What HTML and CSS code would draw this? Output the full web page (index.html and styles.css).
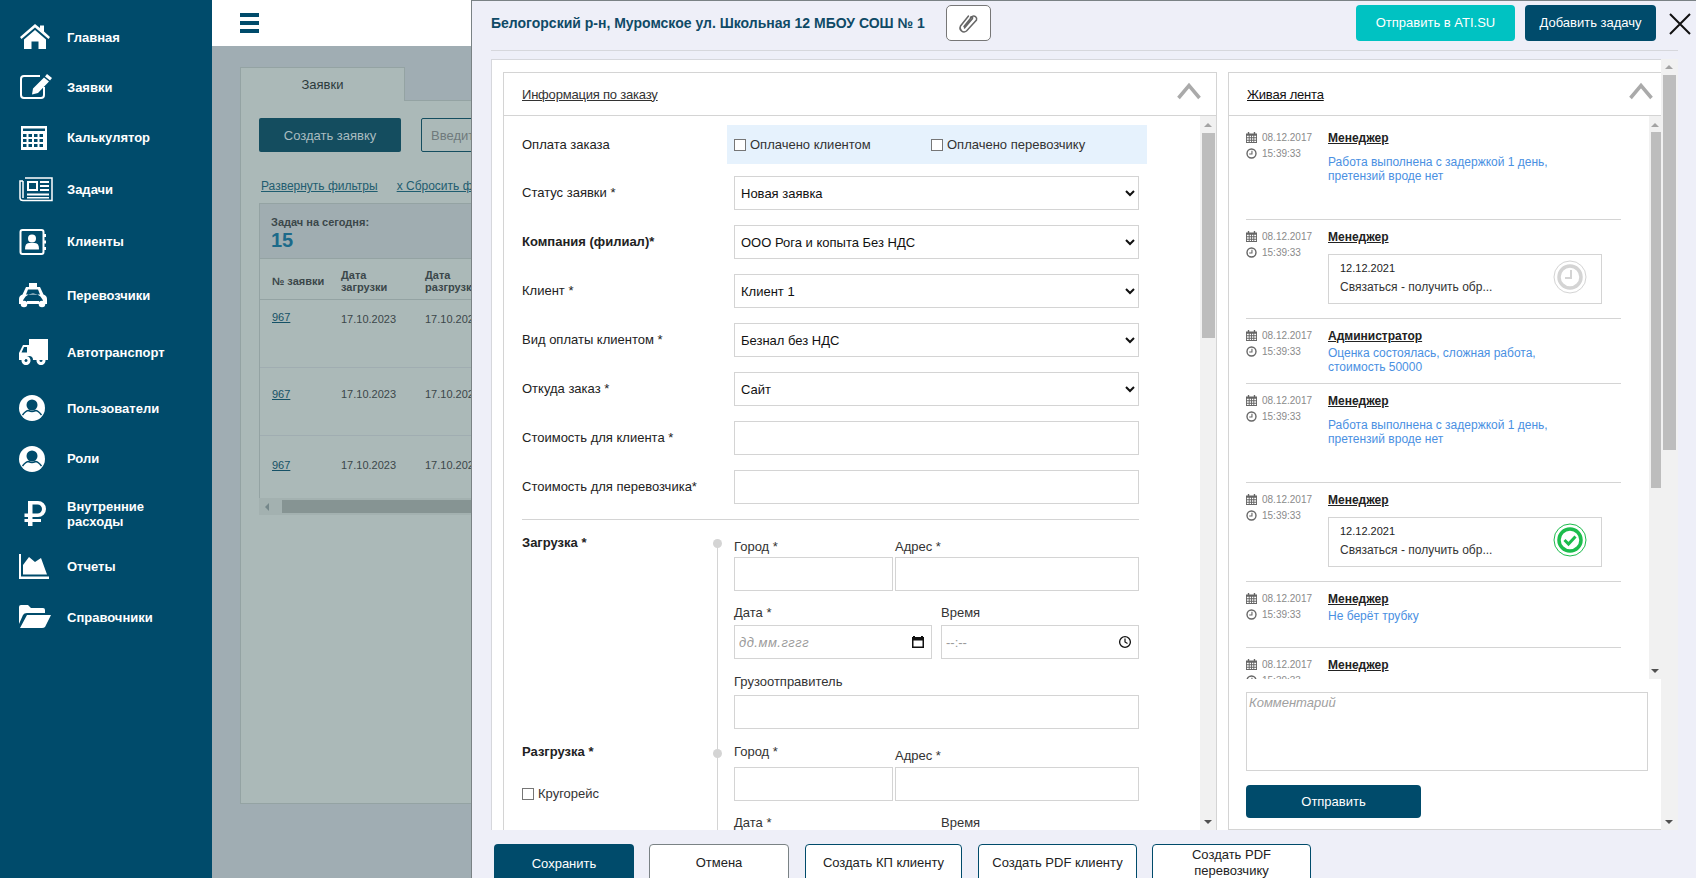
FILE: index.html
```html
<!DOCTYPE html>
<html lang="ru">
<head>
    <meta charset="UTF-8">
    <meta name="viewport" content="width=device-width, initial-scale=1.0">
    <title>Заявки</title>
    <link rel="stylesheet" href="styles.css">
</head>
<body>
    <div class="app">
        <!-- left menu -->
        <nav class="sidebar">
            <a class="nav-item">
                <svg class="nav-icon" viewBox="0 0 34 26"><path fill="#fff" d="M16 0 L21 4 V1.500 H25 V7.500 L31 13 L29.500 15 L16 3.600 L2.500 15 L1 13 Z M16 6 L27 15.500 V25 H19.500 V17.500 H12.500 V25 H5 V15.500 Z"/></svg>
                <span>Главная</span>
            </a>
            <a class="nav-item">
                <svg class="nav-icon" viewBox="0 0 34 26"><path fill="none" stroke="#fff" stroke-width="2" d="M21 2 H5 Q2 2 2 5 V21 Q2 24 5 24 H22 Q25 24 25 21 V13"/><path fill="#fff" d="M28 0 L33 4 L31 6.500 L26 2.500 Z M25 3.500 L30 7.500 L19 19 L13 20.500 L14 14.500 Z"/></svg>
                <span>Заявки</span>
            </a>
            <a class="nav-item">
                <svg class="nav-icon" viewBox="0 0 34 26"><path fill="#fff" fill-rule="evenodd" d="M2 1 H28 V25 H2 Z M4 3.500 V6 H26 V3.500 Z M4 9 V12 H7.500 V9 Z M9.500 9 V12 H13 V9 Z M15 9 V12 H18.500 V9 Z M20.500 9 V12 H24 V9 Z M4 14 V17 H7.500 V14 Z M9.500 14 V17 H13 V14 Z M15 14 V17 H18.500 V14 Z M20.500 14 V17 H24 V14 Z M4 19 V22 H7.500 V19 Z M9.500 19 V22 H13 V19 Z M15 19 V22 H18.500 V19 Z M20.500 19 V22 H24 V19 Z"/></svg>
                <span>Калькулятор</span>
            </a>
            <a class="nav-item">
                <svg class="nav-icon" viewBox="0 0 34 26"><g fill="none" stroke="#fff" stroke-width="1.500"><path d="M6 2 H33 V24.500 H4 Q1 24.500 1 22 V5 H4"/><path d="M4 5 V22"/><path stroke-width="2" d="M9 6 H18 V14 H9 Z"/></g><path fill="#fff" d="M21 5 H30 V7 H21 Z M21 9 H30 V11 H21 Z M21 13 H30 V15 H21 Z M8 17.500 H30 V19.500 H8 Z M8 21 H30 V22.500 H8 Z"/></svg>
                <span>Задачи</span>
            </a>
            <a class="nav-item">
                <svg class="nav-icon" viewBox="0 0 34 26"><rect x="1.500" y="1" width="23" height="24" rx="2" fill="none" stroke="#fff" stroke-width="2"/><path fill="#fff" d="M25 5 H27 V8 H25 Z M25 11.500 H27 V14.500 H25 Z M25 18 H27 V21 H25 Z"/><circle cx="13" cy="9.500" r="4" fill="#fff"/><path fill="#fff" d="M6 20 Q6 14 10 14 H16 Q20 14 20 20 Q20 20.500 19 20.500 H7 Q6 20.500 6 20 Z"/></svg>
                <span>Клиенты</span>
            </a>
            <a class="nav-item">
                <svg class="nav-icon" viewBox="0 0 34 26"><path fill="#fff" fill-rule="evenodd" d="M10 0 H18 V4 H21 L24.500 11.500 Q28 12.500 28 16 V21 H24.500 A4 4 0 0 0 3.500 21 H0 V16 Q0 12.500 3.500 11.500 L7 4 H10 Z M9 6.500 L7 11.500 H21 L19 6.500 Z"/><circle cx="5" cy="21" r="3.300" fill="#fff"/><circle cx="23" cy="21" r="3.300" fill="#fff"/><rect x="8" y="18" width="12" height="3" fill="#fff"/></svg>
                <span>Перевозчики</span>
            </a>
            <a class="nav-item">
                <svg class="nav-icon" viewBox="0 0 34 26"><path fill="#fff" fill-rule="evenodd" d="M10 0 H29 V21 H14 A4 4 0 0 0 6 21 H0 V14 L4 6 H10 Z M5 8 L2.500 13.500 H8 V8 Z"/><path fill="#fff" fill-rule="evenodd" d="M7 17 a4.500 4.500 0 1 0 .01 0 Z M7 20 a1.500 1.500 0 1 1 -.01 0 Z M22 17 a4.500 4.500 0 1 0 .01 0 Z M22 20 a1.500 1.500 0 1 1 -.01 0 Z"/></svg>
                <span>Автотранспорт</span>
            </a>
            <a class="nav-item">
                <svg class="nav-icon" viewBox="0 0 34 26"><use href="#ico-user"/></svg>
                <span>Пользователи</span>
            </a>
            <a class="nav-item">
                <svg class="nav-icon" viewBox="0 0 34 26"><use href="#ico-user"/></svg>
                <span>Роли</span>
            </a>
            <a class="nav-item">
                <svg class="nav-icon" viewBox="0 0 34 26"><path fill="#fff" fill-rule="evenodd" d="M7 1 H17 A8 8 0 0 1 17 17 H11.500 V19 H20 V22 H11.500 V26 H7 V22 H3.500 V19 H7 V17 H3.500 V13.500 H7 Z M11.500 4.500 V13.500 H16.500 A4.500 4.500 0 0 0 16.500 4.500 Z" transform="translate(2 -1)"/></svg>
                <span>Внутренние<br>расходы</span>
            </a>
            <a class="nav-item">
                <svg class="nav-icon" viewBox="0 0 34 26"><path fill="#fff" d="M0 0 H2 V22.500 H30 V25 H0 Z M4 20.500 V11 L10 3 L16 8 L22 4 L28 20.500 Z"/></svg>
                <span>Отчеты</span>
            </a>
            <a class="nav-item">
                <svg class="nav-icon" viewBox="0 0 34 26"><path fill="#fff" d="M0 3 Q0 1 2 1 H9 L12 4 H24 Q26 4 26 6 V9 H8 Q5 9 4 11 L0 20 Z M8 11 H32 L26 23 Q25 24 23 24 H1 Z"/></svg>
                <span>Справочники</span>
            </a>
        </nav>

        <!-- page under the modal -->
        <main class="page">
            <header class="topbar">
                <div class="burger"><i></i><i></i><i></i></div>
            </header>
            <div class="content">
                <div class="tab">Заявки</div>
                <section class="tab-panel">
                    <div class="toolbar">
                        <button class="btn-create">Создать заявку</button>
                        <input class="search" placeholder="Введите">
                    </div>
                    <div class="filter-links">
                        <a>Развернуть фильтры</a>
                        <a>x Сбросить фильтры</a>
                    </div>
                    <div class="today">
                        <div class="today-label">Задач на сегодня:</div>
                        <div class="today-count">15</div>
                    </div>
                    <div class="orders">
                        <div class="orders-head">
                            <b class="col-num">№ заявки</b>
                            <b class="col-date">Дата<br>загрузки</b>
                            <b class="col-date">Дата<br>разгрузки</b>
                        </div>
                        <div class="orders-row row-a">
                            <a class="col-num">967</a>
                            <span class="col-date">17.10.2023</span>
                            <span class="col-date">17.10.2023</span>
                        </div>
                        <div class="orders-row row-b">
                            <a class="col-num">967</a>
                            <span class="col-date">17.10.2023</span>
                            <span class="col-date">17.10.2023</span>
                        </div>
                        <div class="orders-row row-c">
                            <a class="col-num">967</a>
                            <span class="col-date">17.10.2023</span>
                            <span class="col-date">17.10.2023</span>
                        </div>
                    </div>
                    <div class="hscroll"><i class="hscroll-arrow"></i><i class="hscroll-thumb"></i></div>
                </section>
            </div>
        </main>
    </div>

    <!-- order modal -->
    <div class="modal">
        <div class="modal-head">
            <h1 class="modal-title">Белогорский р-н, Муромское ул. Школьная 12 МБОУ СОШ № 1</h1>
            <button class="btn-clip">
                <svg width="24" height="24" viewBox="0 0 24 24"><path fill="none" stroke="#666" stroke-width="1.500" stroke-linecap="round" d="M8 15.500 L16 5.500 A3 3 0 0 1 20.500 9 L10.500 20 A4 4 0 0 1 4.500 15 L12.500 5 M8.500 17 L16.500 7.500 A1 1 0 0 0 14.500 6.500"/></svg>
            </button>
            <div class="modal-actions">
                <button class="btn btn-ati">Отправить в ATI.SU</button>
                <button class="btn btn-task">Добавить задачу</button>
            </div>
            <svg class="modal-close" width="22" height="22" viewBox="0 0 22 22"><path stroke="#111" stroke-width="2" d="M1 1 L21 21 M21 1 L1 21"/></svg>
        </div>

        <div class="modal-body">
            <div class="panels">
                <section class="panel panel-order">
                    <div class="panel-head">
                        <a class="panel-title">Информация по заказу</a>
                        <svg class="chevron" width="24" height="18" viewBox="0 0 24 18"><path fill="none" stroke="#aaa" stroke-width="3.500" d="M1.500 16 L12 3.500 L22.500 16"/></svg>
                    </div>
                    <div class="panel-main">
                        <form class="order-form">
                            <div class="form-row form-row-pay">
                                <label class="form-label">Оплата заказа</label>
                                <div class="pay-band">
                                    <label class="check pay-client"><input type="checkbox">Оплачено клиентом</label>
                                    <label class="check"><input type="checkbox">Оплачено перевозчику</label>
                                </div>
                            </div>
                            <div class="form-row">
                                <label class="form-label">Статус заявки *</label>
                                <select class="control"><option>Новая заявка</option></select>
                            </div>
                            <div class="form-row">
                                <label class="form-label form-label-bold">Компания (филиал)*</label>
                                <select class="control"><option>ООО Рога и копыта Без НДС</option></select>
                            </div>
                            <div class="form-row">
                                <label class="form-label">Клиент *</label>
                                <select class="control"><option>Клиент 1</option></select>
                            </div>
                            <div class="form-row">
                                <label class="form-label">Вид оплаты клиентом *</label>
                                <select class="control"><option>Безнал без НДС</option></select>
                            </div>
                            <div class="form-row">
                                <label class="form-label">Откуда заказ *</label>
                                <select class="control"><option>Сайт</option></select>
                            </div>
                            <div class="form-row">
                                <label class="form-label">Стоимость для клиента *</label>
                                <input class="control" type="text">
                            </div>
                            <div class="form-row">
                                <label class="form-label">Стоимость для перевозчика*</label>
                                <input class="control" type="text">
                            </div>
                            <hr class="form-sep">

                            <div class="route route-load">
                                <div class="route-side">
                                    <label class="form-label form-label-bold">Загрузка *</label>
                                </div>
                                <div class="route-fields">
                                    <div class="field-line">
                                        <div class="field field-city"><label>Город *</label><input class="control" type="text"></div>
                                        <div class="field field-addr"><label>Адрес *</label><input class="control" type="text"></div>
                                    </div>
                                    <div class="field-line field-line-date">
                                        <div class="field field-date">
                                            <label>Дата *</label>
                                            <div class="picker">
                                                <input class="control control-date" type="text" placeholder="дд.мм.гггг">
                                                <svg class="picker-icon"><use href="#ico-picker-date"/></svg>
                                            </div>
                                        </div>
                                        <div class="field field-time">
                                            <label>Время</label>
                                            <div class="picker">
                                                <input class="control control-time" type="text" placeholder="--:--">
                                                <svg class="picker-icon"><use href="#ico-picker-time"/></svg>
                                            </div>
                                        </div>
                                    </div>
                                    <div class="field-line field-line-wide">
                                        <div class="field field-wide"><label>Грузоотправитель</label><input class="control" type="text"></div>
                                    </div>
                                </div>
                            </div>

                            <div class="route route-unload">
                                <div class="route-side">
                                    <label class="form-label form-label-bold">Разгрузка *</label>
                                    <label class="check check-round"><input type="checkbox">Кругорейс</label>
                                </div>
                                <div class="route-fields">
                                    <div class="field-line">
                                        <div class="field field-city field-city-high"><label>Город *</label><input class="control" type="text"></div>
                                        <div class="field field-addr field-addr-low"><label>Адрес *</label><input class="control" type="text"></div>
                                    </div>
                                    <div class="field-line field-line-date">
                                        <div class="field field-date">
                                            <label>Дата *</label>
                                            <div class="picker">
                                                <input class="control control-date" type="text" placeholder="дд.мм.гггг">
                                                <svg class="picker-icon"><use href="#ico-picker-date"/></svg>
                                            </div>
                                        </div>
                                        <div class="field field-time">
                                            <label>Время</label>
                                            <div class="picker">
                                                <input class="control control-time" type="text" placeholder="--:--">
                                                <svg class="picker-icon"><use href="#ico-picker-time"/></svg>
                                            </div>
                                        </div>
                                    </div>
                                </div>
                            </div>
                        </form>
                        <div class="scrollbar scrollbar-form"><i class="arrow-up"></i><i class="thumb"></i><i class="arrow-down"></i></div>
                    </div>
                </section>

                <section class="panel panel-feed">
                    <div class="panel-head">
                        <a class="panel-title panel-title-dark">Живая лента</a>
                        <svg class="chevron" width="24" height="18" viewBox="0 0 24 18"><path fill="none" stroke="#aaa" stroke-width="3.500" d="M1.500 16 L12 3.500 L22.500 16"/></svg>
                    </div>
                    <div class="feed-wrap">
                        <div class="feed">
                            <article class="feed-item">
                                <div class="stamp">
                                    <div class="stamp-line"><svg class="stamp-icon"><use href="#ico-cal"/></svg>08.12.2017</div>
                                    <div class="stamp-line"><svg class="stamp-icon"><use href="#ico-time"/></svg>15:39:33</div>
                                </div>
                                <div class="feed-main">
                                    <a class="author">Менеджер</a>
                                    <p class="msg">Работа выполнена с задержкой 1 день,<br>претензий вроде нет</p>
                                </div>
                            </article>
                            <article class="feed-item">
                                <div class="stamp">
                                    <div class="stamp-line"><svg class="stamp-icon"><use href="#ico-cal"/></svg>08.12.2017</div>
                                    <div class="stamp-line"><svg class="stamp-icon"><use href="#ico-time"/></svg>15:39:33</div>
                                </div>
                                <div class="feed-main">
                                    <a class="author">Менеджер</a>
                                    <div class="task-box">
                                        <div>
                                            <div class="task-date">12.12.2021</div>
                                            <div class="task-text">Связаться - получить обр...</div>
                                        </div>
                                        <svg class="task-state" width="34" height="34" viewBox="0 0 34 34"><circle cx="17" cy="17" r="16" fill="none" stroke="#d4d4d4"/><circle cx="17" cy="17" r="11" fill="none" stroke="#d4d4d4" stroke-width="3.500"/><path fill="none" stroke="#d4d4d4" stroke-width="2" d="M18 10 V18 H12"/></svg>
                                    </div>
                                </div>
                            </article>
                            <article class="feed-item feed-item-short">
                                <div class="stamp">
                                    <div class="stamp-line"><svg class="stamp-icon"><use href="#ico-cal"/></svg>08.12.2017</div>
                                    <div class="stamp-line"><svg class="stamp-icon"><use href="#ico-time"/></svg>15:39:33</div>
                                </div>
                                <div class="feed-main">
                                    <a class="author">Администратор</a>
                                    <p class="msg msg-tight">Оценка состоялась, сложная работа,<br>стоимость 50000</p>
                                </div>
                            </article>
                            <article class="feed-item">
                                <div class="stamp">
                                    <div class="stamp-line"><svg class="stamp-icon"><use href="#ico-cal"/></svg>08.12.2017</div>
                                    <div class="stamp-line"><svg class="stamp-icon"><use href="#ico-time"/></svg>15:39:33</div>
                                </div>
                                <div class="feed-main">
                                    <a class="author">Менеджер</a>
                                    <p class="msg">Работа выполнена с задержкой 1 день,<br>претензий вроде нет</p>
                                </div>
                            </article>
                            <article class="feed-item">
                                <div class="stamp">
                                    <div class="stamp-line"><svg class="stamp-icon"><use href="#ico-cal"/></svg>08.12.2017</div>
                                    <div class="stamp-line"><svg class="stamp-icon"><use href="#ico-time"/></svg>15:39:33</div>
                                </div>
                                <div class="feed-main">
                                    <a class="author">Менеджер</a>
                                    <div class="task-box">
                                        <div>
                                            <div class="task-date">12.12.2021</div>
                                            <div class="task-text">Связаться - получить обр...</div>
                                        </div>
                                        <svg class="task-state" width="34" height="34" viewBox="0 0 34 34"><circle cx="17" cy="17" r="16" fill="none" stroke="#1cbc4c"/><circle cx="17" cy="17" r="11" fill="none" stroke="#1cbc4c" stroke-width="3.500"/><path fill="none" stroke="#1cbc4c" stroke-width="3" d="M11.500 17 L15.500 21 L22.500 13.500"/></svg>
                                    </div>
                                </div>
                            </article>
                            <article class="feed-item feed-item-one">
                                <div class="stamp">
                                    <div class="stamp-line"><svg class="stamp-icon"><use href="#ico-cal"/></svg>08.12.2017</div>
                                    <div class="stamp-line"><svg class="stamp-icon"><use href="#ico-time"/></svg>15:39:33</div>
                                </div>
                                <div class="feed-main">
                                    <a class="author">Менеджер</a>
                                    <p class="msg msg-tight">Не берёт трубку</p>
                                </div>
                            </article>
                            <article class="feed-item">
                                <div class="stamp">
                                    <div class="stamp-line"><svg class="stamp-icon"><use href="#ico-cal"/></svg>08.12.2017</div>
                                    <div class="stamp-line"><svg class="stamp-icon"><use href="#ico-time"/></svg>15:39:33</div>
                                </div>
                                <div class="feed-main">
                                    <a class="author">Менеджер</a>
                                </div>
                            </article>
                        </div>
                        <div class="scrollbar scrollbar-feed"><i class="arrow-up"></i><i class="thumb"></i><i class="arrow-down"></i></div>
                    </div>
                    <div class="compose">
                        <textarea class="comment" placeholder="Комментарий"></textarea>
                        <button class="btn btn-send">Отправить</button>
                    </div>
                </section>
            </div>
            <div class="scrollbar scrollbar-outer"><i class="arrow-up"></i><i class="thumb"></i><i class="arrow-down"></i></div>
        </div>

        <div class="modal-foot">
            <button class="btn btn-save">Сохранить</button>
            <button class="btn-line btn-cancel">Отмена</button>
            <button class="btn-line btn-kp">Создать КП клиенту</button>
            <button class="btn-line btn-pdf">Создать PDF клиенту</button>
            <button class="btn-line btn-pdf btn-two">Создать PDF<br>перевозчику</button>
        </div>
    </div>

    <!-- shared small icons -->
    <svg class="sprite" width="0" height="0">
        <symbol id="ico-user" viewBox="0 0 34 26"><circle cx="13" cy="13" r="13" fill="#fff"/><circle cx="13" cy="10" r="5.500" fill="#004b6b"/><path fill="none" stroke="#004b6b" stroke-width="1.500" d="M3.500 20 Q7 15.500 9.500 15.500 Q13 17.500 16.500 15.500 Q19 15.500 22.500 20"/></symbol>
        <symbol id="ico-cal" viewBox="0 0 12 12"><path fill="#666" fill-rule="evenodd" d="M0 1.500 H2 V0 H3.500 V1.500 H8.500 V0 H10 V1.500 H12 V12 H0 Z M1 4 V5.800 H3 V4 Z M4 4 V5.800 H5.500 V4 Z M6.500 4 V5.800 H8 V4 Z M9 4 V5.800 H11 V4 Z M1 6.800 V8.500 H3 V6.800 Z M4 6.800 V8.500 H5.500 V6.800 Z M6.500 6.800 V8.500 H8 V6.800 Z M9 6.800 V8.500 H11 V6.800 Z M1 9.500 V11 H3 V9.500 Z M4 9.500 V11 H5.500 V9.500 Z M6.500 9.500 V11 H8 V9.500 Z M9 9.500 V11 H11 V9.500 Z"/></symbol>
        <symbol id="ico-time" viewBox="0 0 12 12"><circle cx="6" cy="6" r="4.900" fill="none" stroke="#666" stroke-width="1.500"/><path fill="none" stroke="#666" stroke-width="1.200" d="M6.500 3 V6.500 H3.500"/></symbol>
        <symbol id="ico-picker-date" viewBox="0 0 14 14"><path fill="#111" fill-rule="evenodd" d="M2 1 H4 V2 H10 V1 H12 V2 H13 V13 H1 V2 H2 Z M2.500 5.500 V11.500 H11.500 V5.500 Z"/></symbol>
        <symbol id="ico-picker-time" viewBox="0 0 14 14"><circle cx="7" cy="7" r="5.400" fill="none" stroke="#111" stroke-width="1.300"/><path fill="none" stroke="#111" stroke-width="1.200" d="M7 3.500 V7 L9.500 8.500"/></symbol>
    </svg>
</body>
</html>
```

FILE: styles.css
```css
* {
    box-sizing: border-box;
}
html, body {
    margin: 0;
    height: 100%;
    overflow: hidden;
}
body {
    font-family: "Liberation Sans", Arial, sans-serif;
    font-size: 12px;
    color: #222;
    background: #a0adb3;
}
button, input, select, textarea {
    font-family: inherit;
}
.app {
    display: flex;
    height: 878px;
}
.sprite {
    position: absolute;
}

/* sidebar */
.sidebar {
    width: 212px;
    flex-shrink: 0;
    background: #004b6b;
    display: grid;
    grid-template-rows: 50px 50px 51px 52px 53px 55px 58px 54px 47px 63px 43px 58px;
    align-content: start;
    padding-top: 12px;
}
.nav-item {
    display: flex;
    align-items: center;
    padding-left: 19px;
    color: #fff;
    font-size: 13px;
    font-weight: bold;
    line-height: 15px;
}
.nav-icon {
    width: 34px;
    height: 26px;
    flex-shrink: 0;
    margin-right: 14px;
}

/* page under modal */
.page {
    flex: 1;
    min-width: 0;
}
.topbar {
    height: 46px;
    background: #fff;
    padding: 13px 0 0 28px;
}
.burger {
    width: 19px;
    height: 20px;
    display: flex;
    flex-direction: column;
    justify-content: space-between;
}
.burger i {
    height: 4px;
    background: #004b6b;
}
.content {
    padding: 21px 0 0 28px;
}
.tab {
    width: 165px;
    height: 34px;
    padding-top: 9px;
    text-align: center;
    font-size: 13px;
    color: #2c3a3c;
    background: #abb9b8;
    border: 1px solid #94a3a3;
    border-bottom: 0;
    position: relative;
    z-index: 1;
}
.tab-panel {
    width: 1300px;
    height: 704px;
    margin-top: -1px;
    padding: 17px 0 0 18px;
    background: #abb9b8;
    border: 1px solid #94a3a3;
}
.toolbar {
    display: flex;
    gap: 20px;
}
.btn-create {
    width: 142px;
    height: 34px;
    background: #144d5f;
    border: 0;
    border-radius: 2px;
    color: #a9bcc0;
    font-size: 13px;
}
.search {
    width: 300px;
    height: 34px;
    padding-left: 9px;
    font-size: 13px;
    background: #abb9b8;
    border: 1px solid #144d5f;
    border-radius: 2px;
}
.search::placeholder {
    color: #6f7a7c;
}
.filter-links {
    display: flex;
    gap: 19px;
    margin: 27px 0 0 2px;
    line-height: 14px;
    color: #1f5d70;
    text-decoration: underline;
}
.today {
    width: 1200px;
    height: 56px;
    margin-top: 10px;
    padding: 12px 0 0 11px;
    background: #a0adb1;
    border: 1px solid #94a3a3;
}
.today-label {
    font-size: 11px;
    font-weight: bold;
    color: #3b474a;
    line-height: 12px;
}
.today-count {
    margin-top: 2px;
    font-size: 20px;
    font-weight: bold;
    color: #1c6a8a;
    line-height: 20px;
}
.orders {
    width: 1200px;
    height: 239px;
    border-left: 1px solid #94a3a3;
}
.orders-head {
    display: flex;
    align-items: center;
    height: 41px;
    padding: 4px 0 0 12px;
    font-size: 11px;
    line-height: 12px;
    color: #3b474a;
    border-bottom: 1px solid #94a3a3;
}
.orders-row {
    display: flex;
    padding-left: 12px;
    font-size: 11px;
    color: #3b474a;
    border-bottom: 1px solid #a0adb1;
}
.orders-row a {
    color: #155166;
    text-decoration: underline;
}
.row-a {
    height: 68px;
    padding-top: 11px;
}
.row-a span {
    padding-top: 2px;
}
.row-b {
    height: 68px;
    padding-top: 20px;
}
.row-c {
    height: 62px;
    padding-top: 23px;
    border-bottom: 0;
}
.col-num {
    width: 69px;
}
.col-date {
    width: 84px;
}
.hscroll {
    width: 1200px;
    height: 17px;
    display: flex;
    align-items: center;
    background: #a3b1b0;
}
.hscroll-arrow {
    width: 0;
    height: 0;
    margin: 0 7px 0 6px;
    border: 4px solid transparent;
    border-left: 0;
    border-right: 4px solid #75878a;
}
.hscroll-thumb {
    flex: 1;
    height: 13px;
    margin-left: 6px;
    background: #869493;
}

/* modal */
.modal {
    position: absolute;
    top: 0;
    left: 471px;
    right: 0;
    bottom: 0;
    overflow: hidden;
    background: #eeeff8;
    border-left: 1px solid #7a8285;
    border-top: 1px solid #7a8285;
}
.modal-head {
    display: flex;
    align-items: center;
    height: 50px;
    margin-left: 19px;
    margin-right: 18px;
    padding: 0 0 6px 0;
    border-bottom: 1px solid #d6d7dc;
}
.modal-title {
    margin: 0;
    font-size: 14px;
    font-weight: bold;
    color: #0f4a66;
}
.btn-clip {
    width: 45px;
    height: 36px;
    margin-left: 21px;
    padding: 0;
    display: flex;
    align-items: center;
    justify-content: center;
    background: #fff;
    border: 1px solid #777;
    border-radius: 5px;
}
.modal-actions {
    display: flex;
    gap: 10px;
    margin-left: auto;
    margin-right: 22px;
}
.btn {
    border: 0;
    border-radius: 4px;
    color: #fff;
    font-size: 13px;
}
.btn-ati {
    width: 159px;
    height: 36px;
    background: #00c2c2;
}
.btn-task {
    width: 131px;
    height: 36px;
    background: #004b6b;
}
.modal-close {
    position: absolute;
    top: 12px;
    right: 5px;
}
.modal-body {
    display: flex;
    height: 771px;
    margin: 8px 0 0 19px;
    width: 1187px;
}
.panels {
    flex: 1;
    min-width: 0;
    display: flex;
    gap: 11px;
    padding: 12px 0 0 11px;
    background: #fff;
    border-top: 1px solid #d6d7dc;
    border-left: 1px solid #d6d7dc;
}
.panel {
    display: flex;
    flex-direction: column;
    border: 1px solid #d4d4d4;
    border-bottom: 0;
}
.panel-order {
    width: 714px;
}
.panel-feed {
    width: 433px;
    border-right: 0;
    border-bottom: 1px solid #d4d4d4;
}
.panel-head {
    display: flex;
    align-items: center;
    flex-shrink: 0;
    height: 43px;
    padding: 0 15px 0 18px;
    border-bottom: 1px solid #d4d4d4;
}
.panel-feed .panel-head {
    padding-right: 8px;
}
.panel-title {
    font-size: 13px;
    letter-spacing: -0.2px;
    color: #333;
    text-decoration: underline;
}
.panel-title-dark {
    color: #111;
}
.chevron {
    margin: 0 0 6px auto;
}
.panel-main {
    flex: 1;
    min-height: 0;
    display: flex;
}
.order-form {
    flex: 1;
    min-width: 0;
    overflow: hidden;
    padding: 9px 0 0 18px;
}

/* scrollbars are drawn so they sit at the same place every run */
.scrollbar {
    flex-shrink: 0;
    display: flex;
    flex-direction: column;
    background: #f1f1f1;
}
.scrollbar .thumb {
    background: #bdbdbd;
}
.arrow-up, .arrow-down {
    width: 0;
    height: 0;
    border: 4px solid transparent;
    border-top: 0;
    border-bottom: 4px solid #8a8a8a;
}
.arrow-down {
    margin-top: auto;
    border-bottom: 0;
    border-top: 4px solid #505050;
}
.arrow-up {
    border-bottom-color: #a3a3a3;
}
.scrollbar-form {
    width: 16px;
    padding: 7px 0 6px 0;
}
.scrollbar-form i[class^="arrow"] {
    margin-left: 4px;
}
.scrollbar-form .thumb {
    width: 13px;
    height: 205px;
    margin: 6px 0 0 2px;
}
.scrollbar-feed {
    width: 12px;
    padding: 7px 0 6px 0;
}
.scrollbar-feed i[class^="arrow"] {
    margin-left: 2px;
}
.scrollbar-feed .thumb {
    width: 10px;
    height: 356px;
    margin: 5px 0 0 2px;
}
.scrollbar-outer {
    width: 17px;
    padding: 6px 0 6px 0;
    background: #f1f1f1;
}
.scrollbar-outer i[class^="arrow"] {
    margin-left: 4px;
}
.scrollbar-outer .thumb {
    width: 13px;
    height: 375px;
    margin: 6px 0 0 2px;
}

/* order form */
.form-row {
    display: flex;
    align-items: center;
    height: 34px;
    margin-bottom: 15px;
}
.form-row-pay {
    height: 39px;
    margin-bottom: 12px;
}
.form-label {
    display: block;
    flex-shrink: 0;
    width: 212px;
    font-size: 13px;
    color: #222;
    line-height: 14px;
}
.form-label-bold {
    font-weight: bold;
}
.control {
    display: block;
    width: 405px;
    height: 34px;
    padding: 0 2px;
    font-size: 13px;
    color: #111;
    background: #fff;
    border: 1px solid #d4d4d4;
    border-radius: 0;
    outline: 0;
}
input.control {
    padding: 0 4px;
}
.pay-band {
    display: flex;
    align-items: center;
    width: 420px;
    height: 39px;
    margin-left: -7px;
    padding-left: 7px;
    background: #e6f2fd;
}
.check {
    display: flex;
    align-items: center;
    font-size: 13px;
    color: #333;
}
.check input {
    appearance: none;
    width: 12px;
    height: 12px;
    margin: 0 4px 0 0;
    background: #fff;
    border: 1px solid #767676;
}
.pay-client {
    width: 197px;
}
.form-sep {
    width: 617px;
    height: 1px;
    margin: 0;
    border: 0;
    background: #d4d4d4;
}
.route {
    display: flex;
}
.route-side {
    width: 195px;
    flex-shrink: 0;
    padding-top: 16px;
}
.route-fields {
    position: relative;
    padding: 20px 0 0 17px;
}
.route-fields::before {
    content: "";
    position: absolute;
    left: 0;
    top: 23px;
    bottom: 0;
    width: 1px;
    background: #d4d4d4;
}
.route-fields::after {
    content: "";
    position: absolute;
    left: -4px;
    top: 19px;
    width: 9px;
    height: 9px;
    border-radius: 50%;
    background: #d4d4d4;
}
.route-unload .route-side,
.route-unload .route-fields {
    padding-top: 16px;
}
.route-unload .route-fields::before {
    top: 0;
}
.route-unload .route-fields::after {
    top: 20px;
}
.check-round {
    margin-top: 27px;
}
.field-line {
    display: flex;
    gap: 2px;
}
.field label {
    display: block;
    height: 14px;
    margin-bottom: 3px;
    line-height: 14px;
    font-size: 13px;
    color: #333;
}
.field-line-date label {
    margin-bottom: 5px;
}
.field-city {
    width: 159px;
}
.field-addr {
    width: 244px;
}
.field-city .control, .field-addr .control, .field-date .control, .field-time .control {
    width: 100%;
}
.field-line-date {
    gap: 9px;
    margin-top: 15px;
}
.field-date, .field-time {
    width: 198px;
}
.field-line-wide {
    margin-top: 16px;
}
.field-line-wide label {
    margin-bottom: 6px;
}
.field-city-high label {
    margin-bottom: 8px;
}
.field-addr-low label {
    margin: 4px 0;
}
.picker {
    position: relative;
}
.picker-icon {
    position: absolute;
    top: 10px;
    right: 7px;
    width: 14px;
    height: 14px;
}
.control-date::placeholder {
    color: #9a9a9a;
    font-style: italic;
    letter-spacing: 0.5px;
}
.control-time::placeholder {
    color: #9a9a9a;
}

/* feed */
.feed-wrap {
    display: flex;
    flex-shrink: 0;
    height: 563px;
}
.feed {
    flex: 1;
    min-width: 0;
    overflow: hidden;
    padding: 5px 0 0 17px;
}
.feed-item {
    display: flex;
    width: 375px;
    height: 99px;
    flex-shrink: 0;
    border-bottom: 1px solid #d4d4d4;
}
.feed-item-short {
    height: 65px;
}
.feed-item-one {
    height: 66px;
}
.stamp {
    width: 82px;
    flex-shrink: 0;
    padding-top: 8px;
}
.stamp-line {
    display: flex;
    align-items: center;
    height: 16px;
    font-size: 10px;
    color: #8a8a8a;
}
.stamp-icon {
    width: 11px;
    height: 11px;
    margin-right: 5px;
}
.feed-main {
    flex: 1;
    padding-top: 10px;
}
.author {
    display: block;
    height: 15px;
    font-size: 12px;
    font-weight: bold;
    line-height: 15px;
    color: #222;
    text-decoration: underline;
}
.msg {
    margin: 9px 0 0;
    font-size: 12px;
    line-height: 14px;
    color: #4a90e2;
}
.msg-tight {
    margin-top: 2px;
}
.task-box {
    display: flex;
    align-items: center;
    justify-content: space-between;
    width: 274px;
    height: 50px;
    margin-top: 9px;
    padding: 0 14px 4px 11px;
    border: 1px solid #d4d4d4;
}
.task-date {
    font-size: 11px;
    line-height: 14px;
    color: #222;
}
.task-text {
    margin-top: 5px;
    font-size: 12px;
    line-height: 14px;
    color: #333;
}
.compose {
    padding: 13px 0 0 17px;
}
.comment {
    display: block;
    width: 402px;
    height: 79px;
    padding: 2px;
    resize: none;
    font-size: 13px;
    border: 1px solid #d4d4d4;
    border-radius: 0;
}
.comment::placeholder {
    color: #a0a0a0;
    font-style: italic;
}
.btn-send {
    display: block;
    width: 175px;
    height: 33px;
    margin-top: 14px;
    background: #004b6b;
}

/* footer */
.modal-foot {
    display: flex;
    gap: 15px;
    margin: 14px 0 0 22px;
}
.btn-save {
    width: 140px;
    height: 38px;
    flex-shrink: 0;
    background: #004b6b;
}
.btn-line {
    height: 38px;
    flex-shrink: 0;
    padding: 0;
    font-size: 13px;
    line-height: 16px;
    color: #222;
    background: #fff;
    border: 1px solid #004b6b;
    border-radius: 4px;
}
.btn-cancel {
    width: 140px;
    border-color: #7a8285;
}
.btn-kp {
    width: 157px;
    margin-left: 1px;
}
.btn-pdf {
    width: 159px;
    margin-left: 1px;
}
.btn-two {
    margin-left: 0;
}
```
